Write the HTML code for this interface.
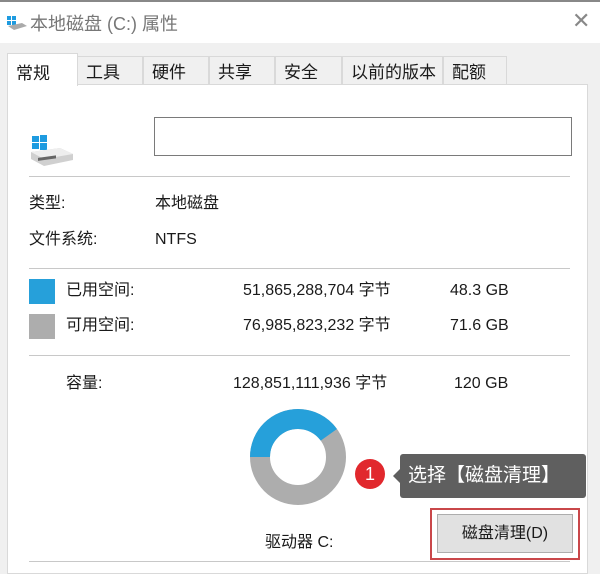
<!DOCTYPE html>
<html><head><meta charset="utf-8"><style>
body{margin:0;width:600px;height:566px;overflow:hidden;background:#f0f0f0;font-family:"Liberation Sans","Noto Sans CJK SC",sans-serif;color:#1a1a1a;position:relative}
.a{position:absolute;white-space:nowrap}
.t{font-size:16px;line-height:22px;height:22px}
.tab{position:absolute;top:56px;height:28px;border:1px solid #d9d9d9;border-bottom:none;background:#f0f0f0;font-size:17px;line-height:32px;padding-left:8px;box-sizing:border-box}
.sep{position:absolute;left:29px;width:541px;height:1px;background:#c8c8c8}
</style></head><body>
<div class="a" style="left:0;top:0;width:600px;height:43px;background:#fff"></div>
<div class="a" style="left:0;top:0;width:600px;height:2px;background:#888"></div>
<svg class="a" style="left:6px;top:14px" width="22" height="18"><rect x="1" y="2" width="4" height="4" fill="#1e9be0"/><rect x="6" y="2" width="4" height="4" fill="#1e9be0"/><rect x="1" y="7" width="4" height="4" fill="#1e9be0"/><rect x="6" y="7" width="4" height="4" fill="#1e9be0"/><path d="M2 12 L16 9 L21 12 L8 16 Z" fill="#aaa"/></svg>
<div class="a" style="left:30px;top:10px;font-size:18px;color:#777">本地磁盘 (C:) 属性</div>
<div class="a" style="left:572px;top:8px;font-size:22px;color:#888">✕</div>
<div class="tab" style="left:77px;width:66px">工具</div>
<div class="tab" style="left:143px;width:66px">硬件</div>
<div class="tab" style="left:209px;width:66px">共享</div>
<div class="tab" style="left:275px;width:67px">安全</div>
<div class="tab" style="left:342px;width:101px">以前的版本</div>
<div class="tab" style="left:443px;width:64px">配额</div>
<div class="a" style="left:7px;top:84px;width:581px;height:490px;background:#fff;border:1px solid #d9d9d9;box-sizing:border-box"></div>
<div class="a" style="left:7px;top:53px;width:71px;height:33px;background:#fff;border:1px solid #d9d9d9;border-bottom:none;box-sizing:border-box;font-size:17px;padding:5px 0 0 8px">常规</div>
<svg class="a" style="left:30px;top:134px" width="44" height="36"><rect x="2" y="2" width="7" height="6" fill="#1e9be0"/><rect x="10" y="1" width="7" height="7" fill="#1e9be0"/><rect x="2" y="9" width="7" height="6" fill="#1e9be0"/><rect x="10" y="9" width="7" height="7" fill="#1e9be0"/><path d="M1 18 L30 14 L43 20 L43 26 L14 32 L1 25 Z" fill="#d0d0d0"/><path d="M1 18 L30 14 L43 20 L14 25 Z" fill="#eee"/><rect x="8" y="25" width="18" height="3" fill="#666" transform="skewY(-8)"/></svg>
<div class="a" style="left:154px;top:117px;width:418px;height:39px;border:1px solid #7a7a7a;box-sizing:border-box"></div>
<div class="sep" style="top:176px"></div>
<div class="a t" style="left:29px;top:193px">类型:</div>
<div class="a t" style="left:155px;top:193px">本地磁盘</div>
<div class="a t" style="left:29px;top:229px">文件系统:</div>
<div class="a t" style="left:155px;top:229px">NTFS</div>
<div class="sep" style="top:268px"></div>
<div class="a" style="left:29px;top:279px;width:26px;height:25px;background:#26a0da"></div>
<div class="a t" style="left:66px;top:280px">已用空间:</div>
<div class="a t" style="left:243px;top:280px">51,865,288,704 字节</div>
<div class="a t" style="left:450px;top:280px">48.3 GB</div>
<div class="a" style="left:29px;top:314px;width:26px;height:25px;background:#adadad"></div>
<div class="a t" style="left:66px;top:315px">可用空间:</div>
<div class="a t" style="left:243px;top:315px">76,985,823,232 字节</div>
<div class="a t" style="left:450px;top:315px">71.6 GB</div>
<div class="sep" style="top:355px"></div>
<div class="a t" style="left:66px;top:373px">容量:</div>
<div class="a t" style="left:233px;top:373px">128,851,111,936 字节</div>
<div class="a t" style="left:454px;top:373px">120 GB</div>
<svg class="a" style="left:246px;top:405px" width="104" height="104">
<circle cx="52" cy="52" r="38" fill="none" stroke="#adadad" stroke-width="20"/>
<circle cx="52" cy="52" r="38" fill="none" stroke="#26a0da" stroke-width="20" stroke-dasharray="95.5 300" transform="rotate(180 52 52)"/>
</svg>
<div class="a t" style="left:265px;top:532px">驱动器 C:</div>
<div class="sep" style="top:561px"></div>
<div class="a" style="left:355px;top:459px;width:30px;height:30px;border-radius:50%;background:#e1282d;color:#fff;font-size:18px;text-align:center;line-height:30px">1</div>
<div class="a" style="left:393px;top:469px;width:0;height:0;border:7px solid transparent;border-right-color:#5f5f5f;border-left:none"></div>
<div class="a" style="left:400px;top:454px;width:186px;height:44px;background:#5f5f5f;border-radius:3px;color:#fff;font-size:19px;line-height:44px;padding-left:8px;box-sizing:border-box">选择【磁盘清理】</div>
<div class="a" style="left:430px;top:508px;width:150px;height:52px;border:2px solid #c9474a;box-sizing:border-box"></div>
<div class="a" style="left:437px;top:514px;width:136px;height:39px;background:#e1e1e1;border:1px solid #adadad;box-sizing:border-box;font-size:16px;text-align:center;line-height:37px">磁盘清理(D)</div>
</body></html>
